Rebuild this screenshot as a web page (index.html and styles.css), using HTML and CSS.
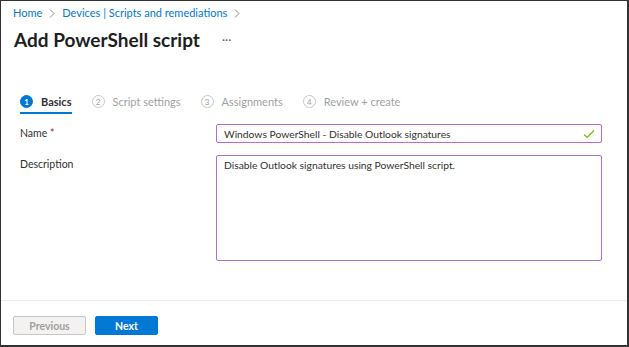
FILE: index.html
```html
<!DOCTYPE html>
<html lang="en">
<head>
    <meta charset="UTF-8">
    <title>Add PowerShell script</title>
    <link rel="stylesheet" href="styles.css">
</head>
<body>
    <div class="frame">
        <div class="breadcrumb">
            <a>Home</a>
            <svg class="chev" width="6" height="9" viewBox="0 0 6 9"><path d="M1 0.5 L5 4.5 L1 8.5" fill="none" stroke="#8a8886" stroke-width="1"/></svg>
            <a>Devices | Scripts and remediations</a>
            <svg class="chev" width="6" height="9" viewBox="0 0 6 9"><path d="M1 0.5 L5 4.5 L1 8.5" fill="none" stroke="#8a8886" stroke-width="1"/></svg>
        </div>
        <div class="title-row">
            <h1>Add PowerShell script</h1>
            <span class="more">···</span>
        </div>

        <div class="steps">
            <div class="step active">
                <span class="num">1</span>
                <span class="label">Basics</span>
            </div>
            <div class="step">
                <span class="num">2</span>
                <span class="label">Script settings</span>
            </div>
            <div class="step">
                <span class="num">3</span>
                <span class="label">Assignments</span>
            </div>
            <div class="step">
                <span class="num">4</span>
                <span class="label">Review + create</span>
            </div>
        </div>

        <div class="form">
            <div class="row">
                <label>Name <span class="req">*</span></label>
                <div class="field">
                    <span class="value">Windows PowerShell - Disable Outlook signatures</span>
                    <svg class="check" width="12" height="10" viewBox="0 0 12 10">
                        <path d="M1 5.5 L4.2 8.5 L11 1.5" fill="none" stroke="#6bb700" stroke-width="1.1"/>
                    </svg>
                </div>
            </div>
            <div class="row">
                <label>Description</label>
                <div class="field area">
                    <span class="value">Disable Outlook signatures using PowerShell script.</span>
                </div>
            </div>
        </div>

        <div class="footer">
            <button class="btn prev" disabled>Previous</button>
            <button class="btn next">Next</button>
        </div>
    </div>
</body>
</html>
```

FILE: styles.css
```css
* {
    box-sizing: border-box;
    margin: 0;
    padding: 0;
    font-family: 'Lato', sans-serif;
}

body {
    background: #fff;
    width: 629px;
    height: 347px;
    overflow: hidden;
}

.frame {
    width: 629px;
    height: 347px;
    border-top: 1px solid #333;
    border-left: 1px solid #333;
    border-right: 2px solid #333;
    border-bottom: 2px solid #333;
    display: flex;
    flex-direction: column;
    color: #323130;
}

.breadcrumb {
    display: flex;
    align-items: center;
    gap: 7px;
    padding: 3px 0 0 12px;
    font-size: 11px;
    height: 20px;
}

.breadcrumb a {
    color: #0078d4;
}

.chev {
    margin-top: 1px;
}

.title-row {
    display: flex;
    align-items: center;
    padding: 6px 0 0 13px;
    height: 30px;
}

h1 {
    font-size: 19px;
    font-weight: 700;
    color: #201f1e;
}

.more {
    margin-left: 22px;
    font-size: 12px;
    color: #605e5c;
}

.steps {
    display: flex;
    gap: 20px;
    padding: 0 0 0 19px;
    margin-top: 38px;
}

.step {
    display: flex;
    align-items: center;
    gap: 8px;
    height: 25px;
    color: #a19f9d;
    font-size: 11px;
    border-bottom: 2px solid transparent;
    padding-top: 2px;
}

.step .num {
    width: 13px;
    height: 13px;
    border-radius: 50%;
    border: 1px solid #c8c6c4;
    font-size: 8px;
    display: flex;
    align-items: center;
    justify-content: center;
    line-height: 1;
}

.step.active {
    color: #323130;
    border-bottom-color: #0078d4;
    font-weight: 700;
}

.step.active .num {
    background: #0078d4;
    border-color: #0078d4;
    color: #fff;
    font-weight: 700;
}

.form {
    display: flex;
    flex-direction: column;
    gap: 12px;
    padding: 10px 25px 0 19px;
}

.row {
    display: flex;
    align-items: flex-start;
}

.row label {
    width: 196px;
    font-size: 10.5px;
    padding-top: 3px;
    color: #323130;
}

.req {
    color: #a4262c;
}

.field {
    flex: 1;
    height: 19px;
    border: 1px solid #b56bd1;
    border-radius: 2px;
    display: flex;
    align-items: center;
    justify-content: space-between;
    padding: 0 6px 0 7px;
    font-size: 10.3px;
    color: #323130;
}

.field.area {
    height: 106px;
    align-items: flex-start;
    padding-top: 3px;
}

.footer {
    margin-top: auto;
    border-top: 1px solid #edebe9;
    height: 45px;
    display: flex;
    align-items: flex-end;
    gap: 9px;
    padding: 0 0 10px 12px;
}

.btn {
    height: 19px;
    border-radius: 2px;
    font-size: 10.5px;
    font-weight: 700;
    font-family: 'Lato', sans-serif;
}

.prev {
    width: 73px;
    background: #f3f2f1;
    border: 1px solid #c8c6c4;
    color: #a19f9d;
}

.next {
    width: 63px;
    background: #0078d4;
    border: 1px solid #0078d4;
    color: #fff;
}
```
